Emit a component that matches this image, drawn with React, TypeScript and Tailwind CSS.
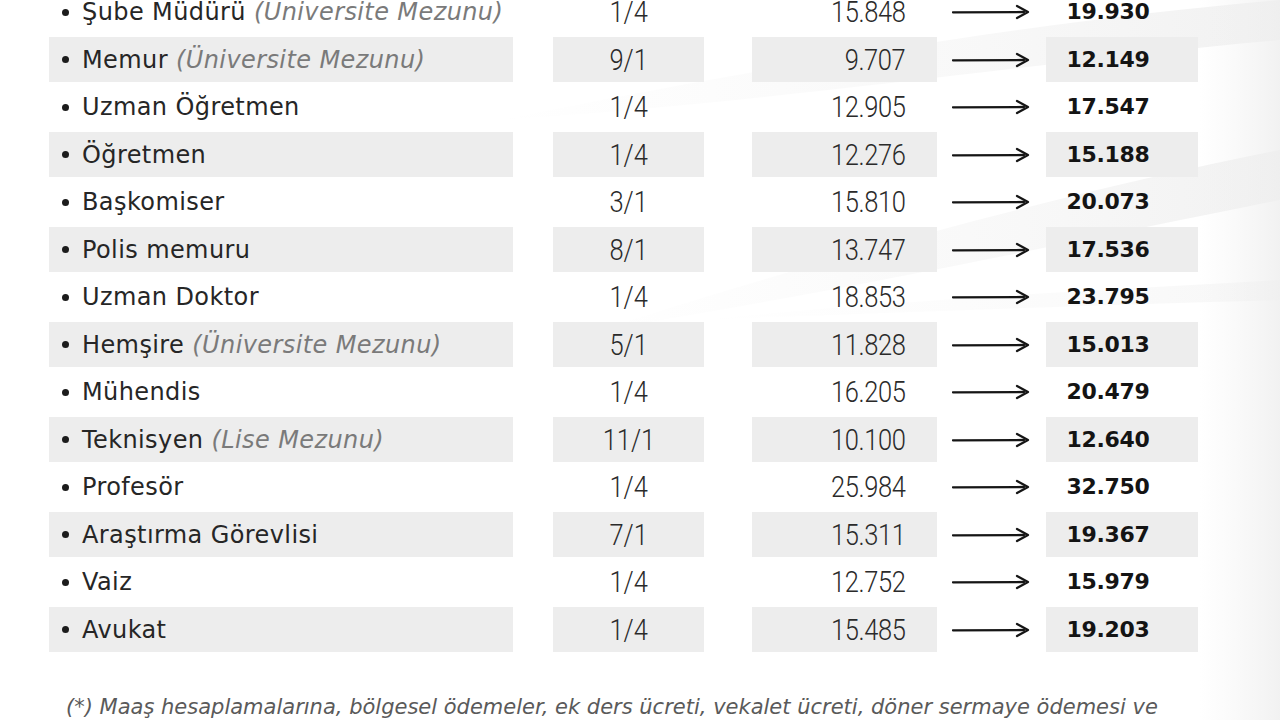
const rows = [
  { name: 'Şube Müdürü', note: '(Üniversite Mezunu)', grade: '1/4', old: '15.848', now: '19.930' },
  { name: 'Memur', note: '(Üniversite Mezunu)', grade: '9/1', old: '9.707', now: '12.149' },
  { name: 'Uzman Öğretmen', grade: '1/4', old: '12.905', now: '17.547' },
  { name: 'Öğretmen', grade: '1/4', old: '12.276', now: '15.188' },
  { name: 'Başkomiser', grade: '3/1', old: '15.810', now: '20.073' },
  { name: 'Polis memuru', grade: '8/1', old: '13.747', now: '17.536' },
  { name: 'Uzman Doktor', grade: '1/4', old: '18.853', now: '23.795' },
  { name: 'Hemşire', note: '(Üniversite Mezunu)', grade: '5/1', old: '11.828', now: '15.013' },
  { name: 'Mühendis', grade: '1/4', old: '16.205', now: '20.479' },
  { name: 'Teknisyen', note: '(Lise Mezunu)', grade: '11/1', old: '10.100', now: '12.640' },
  { name: 'Profesör', grade: '1/4', old: '25.984', now: '32.750' },
  { name: 'Araştırma Görevlisi', grade: '7/1', old: '15.311', now: '19.367' },
  { name: 'Vaiz', grade: '1/4', old: '12.752', now: '15.979' },
  { name: 'Avukat', grade: '1/4', old: '15.485', now: '19.203' },
];

function Arrow() {
  return (
    <svg width="78" height="16" viewBox="0 0 78 16" className="shrink-0">
      <path d="M1 8.3 L72 8" stroke="#151515" strokeWidth="2.3" strokeLinecap="round" />
      <path d="M65 2 L76 8 L65 14" fill="none" stroke="#151515" strokeWidth="2.3" strokeLinejoin="round" strokeLinecap="round" />
    </svg>
  );
}

export default function App() {
  return (
    <div className="relative w-[1280px] h-[720px] overflow-hidden bg-white font-['DejaVu_Sans',sans-serif] text-[#262626]">
      {/* faint background swoosh */}
      <svg className="absolute inset-0" width="1280" height="720" viewBox="0 0 1280 720">
        <defs>
          <linearGradient id="sw" x1="0" y1="0" x2="1" y2="0">
            <stop offset="0" stopColor="#ececec" stopOpacity="0" />
            <stop offset="0.6" stopColor="#ececec" stopOpacity="0.35" />
            <stop offset="1" stopColor="#e8e8e8" stopOpacity="0.6" />
          </linearGradient>
          <linearGradient id="edge" x1="0" y1="0" x2="1" y2="0">
            <stop offset="0" stopColor="#f2f2f2" stopOpacity="0" />
            <stop offset="1" stopColor="#eeeeee" stopOpacity="0.8" />
          </linearGradient>
        </defs>
        <path d="M500 120 C 800 60, 1050 20, 1280 0 L1280 40 C 1050 60, 800 100, 500 120 Z" fill="url(#sw)" />
        <path d="M600 330 C 850 250, 1080 190, 1280 150 L1280 200 C 1080 240, 850 290, 600 330 Z" fill="url(#sw)" />
        <path d="M700 320 C 900 300, 1100 290, 1280 280 L1280 300 C 1100 305, 900 312, 700 320 Z" fill="url(#sw)" opacity="0.6" />
        <rect x="1200" y="0" width="80" height="720" fill="url(#edge)" />
      </svg>

      <div className="relative -mt-[10.5px] pl-[49px] flex flex-col gap-y-[2.5px]">
        {rows.map((r, i) => {
          const shade = i % 2 === 1 ? 'bg-[#ededed]' : '';
          return (
            <div key={r.name} className="flex items-center h-[45px]">
              <div className={`w-[464px] h-full flex items-center pl-[13px] ${shade}`}>
                <span className="w-[7px] h-[7px] rounded-full bg-[#1c1c1c] mr-[13px]" />
                <span className="text-[24px] leading-none tracking-[0.4px] whitespace-nowrap">
                  {r.name}
                  {r.note && <span className="italic text-[#7a7a7a]"> {r.note}</span>}
                </span>
              </div>
              <div className={`ml-[40px] w-[151px] h-full flex items-center justify-center ${shade}`}>
                <span className="font-['Roboto',sans-serif] font-light text-[30px] leading-none text-[#2a2a2a] scale-x-[0.85]">{r.grade}</span>
              </div>
              <div className={`ml-[48px] w-[185px] h-full flex items-center justify-end pr-[32px] ${shade}`}>
                <span className="font-['Roboto',sans-serif] font-light text-[30px] leading-none tracking-[-0.5px] text-[#2a2a2a] scale-x-[0.85] origin-right">{r.old}</span>
              </div>
              <div className="ml-[15px] w-[80px] flex items-center">
                <Arrow />
              </div>
              <div className={`ml-[14px] w-[152px] h-full flex items-center justify-center pr-[28px] ${shade}`}>
                <span className="text-[22px] font-bold leading-none tracking-[-0.3px] text-[#141414]">{r.now}</span>
              </div>
            </div>
          );
        })}
      </div>

      <p className="relative mt-[45px] pl-[66px] text-[21px] italic text-[#5a5a5a] leading-none whitespace-nowrap">
        (*) Maaş hesaplamalarına, bölgesel ödemeler, ek ders ücreti, vekalet ücreti, döner sermaye ödemesi ve
      </p>
    </div>
  );
}
